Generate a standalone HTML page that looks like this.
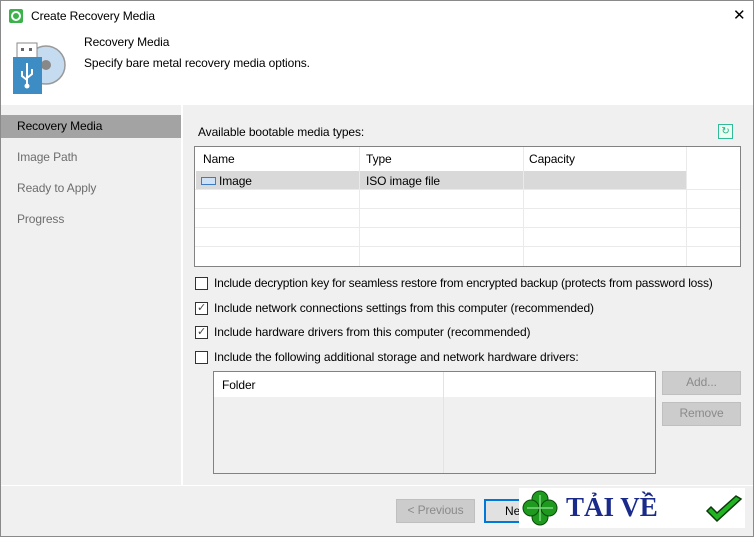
<!DOCTYPE html><html><head><style>
body{margin:0;width:754px;height:537px;overflow:hidden;font-family:"Liberation Sans",sans-serif;font-size:12px;color:#000;letter-spacing:-0.1px}
#w{position:absolute;left:0;top:0;width:752px;height:535px;border:1px solid #8a8a8a;background:#f0f0f0;}
.a{position:absolute;}
.t{position:absolute;white-space:nowrap;}
.cb{position:absolute;left:194px;width:11px;height:11px;border:1px solid #333;background:#fff;}
.btn{position:absolute;background:#ccc;border:1px solid #bfbfbf;color:#8a8a8a;text-align:center;line-height:21px;}
</style></head><body><div id="w">
<div class="a" style="left:0;top:0;width:752px;height:104px;background:#fff"></div>
<div class="a" style="left:8px;top:8px;width:14px;height:14px;background:#3cb34a;border-radius:2px"><div class="a" style="left:2px;top:2px;width:6px;height:6px;border:2px solid #fff;border-radius:50%"></div></div>
<div class="t" style="left:30px;top:8px;font-size:12px">Create Recovery Media</div>
<div class="t" style="left:732px;top:5px;font-size:15px">✕</div>
<svg class="a" style="left:10px;top:40px" width="56" height="56"><circle cx="35" cy="24" r="19" fill="#c5dcf0" stroke="#999" stroke-width="1.5"/><circle cx="35" cy="24" r="5" fill="#888"/><rect x="6" y="2" width="20" height="15" fill="#fff" stroke="#888"/><rect x="10" y="7" width="3" height="3" fill="#666"/><rect x="18" y="7" width="3" height="3" fill="#666"/><rect x="2" y="16" width="29" height="37" fill="#3d8cc4"/><path d="M16 22v22M11 30v5l5 4M21 28v5l-5 4" stroke="#fff" stroke-width="2" fill="none"/><circle cx="16" cy="45" r="2.5" fill="#fff"/></svg>
<div class="t" style="left:83px;top:34px">Recovery Media</div>
<div class="t" style="left:83px;top:55px">Specify bare metal recovery media options.</div>
<div class="a" style="left:0;top:114px;width:180px;height:23px;background:#a3a3a3"></div>
<div class="t" style="left:16px;top:118px">Recovery Media</div>
<div class="t" style="left:16px;top:149px;color:#6d6d6d">Image Path</div>
<div class="t" style="left:16px;top:180px;color:#6d6d6d">Ready to Apply</div>
<div class="t" style="left:16px;top:211px;color:#6d6d6d">Progress</div>
<div class="a" style="left:180px;top:104px;width:2px;height:380px;background:#fff"></div>
<div class="t" style="left:197px;top:124px">Available bootable media types:</div>
<div class="a" style="left:717px;top:123px;width:13px;height:13px;border:1px solid #3b9;background:#eafff0;color:#2a8;font-size:10px;line-height:13px;text-align:center">↻</div>
<div class="a" style="left:193px;top:145px;width:545px;height:119px;border:1px solid #828282;background:#fff">
<div class="a" style="left:1px;top:24px;width:490px;height:18px;background:#d9d9d9"></div>
<div class="a" style="left:164px;top:0;width:1px;height:119px;background:#eaeaea"></div>
<div class="a" style="left:328px;top:0;width:1px;height:119px;background:#eaeaea"></div>
<div class="a" style="left:491px;top:0;width:1px;height:119px;background:#eaeaea"></div>
<div class="a" style="left:0;top:42px;width:545px;height:1px;background:#eaeaea"></div>
<div class="a" style="left:0;top:61px;width:545px;height:1px;background:#eaeaea"></div>
<div class="a" style="left:0;top:80px;width:545px;height:1px;background:#eaeaea"></div>
<div class="a" style="left:0;top:99px;width:545px;height:1px;background:#eaeaea"></div>
<div class="t" style="left:8px;top:5px">Name</div><div class="t" style="left:171px;top:5px">Type</div><div class="t" style="left:334px;top:5px">Capacity</div>
<div class="a" style="left:6px;top:30px;width:13px;height:6px;border:1px solid #3d7cc4;background:#cfe2f5"></div>
<div class="t" style="left:24px;top:27px">Image</div><div class="t" style="left:171px;top:27px">ISO image file</div>
</div>
<div class="cb" style="top:276px"></div><div class="t" style="left:213px;top:275px;letter-spacing:-0.2px">Include decryption key for seamless restore from encrypted backup (protects from password loss)</div>
<div class="cb" style="top:301px;font-size:11px;line-height:11px;text-align:center;color:#444">✓</div><div class="t" style="left:213px;top:300px">Include network connections settings from this computer (recommended)</div>
<div class="cb" style="top:325px;font-size:11px;line-height:11px;text-align:center;color:#444">✓</div><div class="t" style="left:213px;top:324px">Include hardware drivers from this computer (recommended)</div>
<div class="cb" style="top:350px"></div><div class="t" style="left:213px;top:349px">Include the following additional storage and network hardware drivers:</div>
<div class="a" style="left:212px;top:370px;width:441px;height:101px;border:1px solid #828282;background:#f0f0f0">
<div class="a" style="left:0;top:0;width:441px;height:25px;background:#fff"></div>
<div class="a" style="left:229px;top:0;width:1px;height:101px;background:#e3e3e3"></div>
<div class="t" style="left:8px;top:6px">Folder</div></div>
<div class="btn" style="left:661px;top:370px;width:77px;height:22px">Add...</div>
<div class="btn" style="left:661px;top:401px;width:77px;height:22px">Remove</div>
<div class="a" style="left:0;top:484px;width:752px;height:1px;background:#fff"></div>
<div class="btn" style="left:395px;top:498px;width:77px;height:22px">&lt; Previous</div>
<div class="a" style="left:483px;top:498px;width:75px;height:20px;border:2px solid #0078d7;background:#e1e1e1;line-height:20px;padding-left:19px">Next</div>
<div class="a" style="left:518px;top:487px;width:226px;height:40px;background:#fff"></div>
<svg class="a" style="left:520px;top:488px" width="38" height="38"><g fill="#1e9a1e" stroke="#0a4a0a" stroke-width="1"><circle cx="19" cy="10" r="8"/><circle cx="19" cy="28" r="8"/><circle cx="10" cy="19" r="8"/><circle cx="28" cy="19" r="8"/></g><path d="M19 6v26M6 19h26" stroke="#7fd67f" stroke-width="1.5"/></svg>
<div class="t" style="left:565px;top:491px;font-family:'Liberation Serif',serif;font-weight:bold;font-size:27px;color:#1a2a8a;letter-spacing:0">TẢI VỀ</div>
<svg class="a" style="left:704px;top:494px" width="38" height="30"><path d="M2 16l10 10L36 4l-5-3-19 17-6-6z" fill="#22b322" stroke="#0a3a0a" stroke-width="1.5"/></svg>
</div></body></html>
